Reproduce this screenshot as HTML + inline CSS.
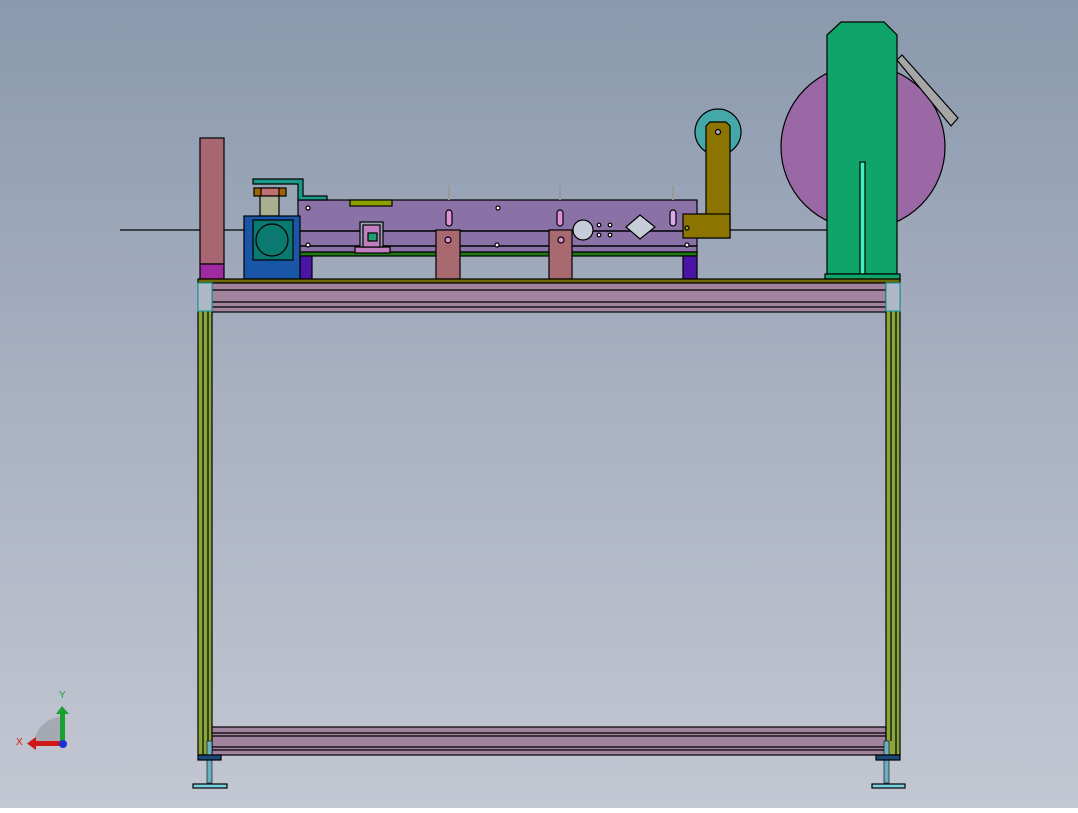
<!DOCTYPE html>
<html><head><style>html,body{margin:0;padding:0}body{width:1078px;height:808px;overflow:hidden}</style></head>
<body>
<svg width="1078" height="808" viewBox="0 0 1078 808" xmlns="http://www.w3.org/2000/svg" font-family="Liberation Sans, sans-serif">
<defs>
<linearGradient id="bg" x1="0" y1="0" x2="0" y2="1">
<stop offset="0" stop-color="#8a99ad"/><stop offset="0.5" stop-color="#a9b1c2"/><stop offset="1" stop-color="#c3c7d2"/>
</linearGradient>
</defs>
<rect width="1078" height="808" fill="url(#bg)"/>
<g stroke="#000" stroke-width="1.2">
<line x1="120" y1="230" x2="245" y2="230"/>
<line x1="730" y1="230" x2="827" y2="230"/>
<circle cx="863" cy="147" r="82" fill="#9a68a4"/>
<polygon points="897,60 902,55 958,118 951,126" fill="#a6a6a6"/>
<polygon points="827,35 841,22 884,22 897,35 897,274 827,274" fill="#0ea46a"/>
<rect x="860" y="162" width="5" height="112" fill="#40f0c0"/>
<rect x="825" y="274" width="75" height="5" fill="#0ea46a"/>
<circle cx="718" cy="132" r="23" fill="#45a8a8"/>
<polygon points="706,126 710,122 726,122 730,126 730,238 683,238 683,214 706,214" fill="#8c7400"/>
<circle cx="718" cy="132" r="2.5" fill="#b0b0c0"/>
<rect x="200" y="138" width="24" height="126" fill="#a86672"/>
<rect x="200" y="264" width="24" height="15" fill="#a02aa0"/>
<rect x="298" y="200" width="399" height="52" fill="#8a72a6"/>
<line x1="300" y1="231" x2="697" y2="231" stroke-width="1.5"/>
<line x1="300" y1="246" x2="697" y2="246" stroke-width="1.5"/>
<rect x="298" y="252" width="399" height="4" fill="#1f7a10"/>
<rect x="350" y="200" width="42" height="6" fill="#8ca000"/>
<rect x="683" y="214" width="47" height="24" fill="#8c7400"/>
<circle cx="583" cy="230" r="10" fill="#c6ccd8"/>
<path d="M626,227 L640,215 L655,227 L640,239 Z" fill="#c6ccd8"/>
<circle cx="599" cy="225" r="1.8" fill="#fff"/><circle cx="610" cy="225" r="1.8" fill="#fff"/>
<circle cx="599" cy="235" r="1.8" fill="#fff"/><circle cx="610" cy="235" r="1.8" fill="#fff"/>
<circle cx="308" cy="208" r="2" fill="#fff"/><circle cx="498" cy="208" r="2" fill="#fff"/>
<circle cx="308" cy="245" r="2" fill="#fff"/><circle cx="497" cy="245" r="2" fill="#fff"/>
<circle cx="687" cy="228" r="2" fill="#9ab000"/><circle cx="687" cy="245" r="2" fill="#fff"/>
<rect x="446" y="210" width="6" height="16" rx="3" fill="#e090d8"/>
<rect x="557" y="210" width="6" height="16" rx="3" fill="#e090d8"/>
<rect x="670" y="210" width="6" height="16" rx="3" fill="#d8a8e8"/>
<line x1="449" y1="186" x2="449" y2="200" stroke="#999" stroke-width="2"/>
<line x1="560" y1="186" x2="560" y2="200" stroke="#999" stroke-width="2"/>
<line x1="673" y1="186" x2="673" y2="200" stroke="#999" stroke-width="2"/>
<rect x="355" y="247" width="35" height="6" fill="#c080c0"/>
<rect x="360" y="222" width="23" height="25" fill="#9aa0b8"/>
<rect x="363" y="225" width="17" height="22" fill="#c080c0"/>
<rect x="368" y="233" width="9" height="8" fill="#20a070"/>
<rect x="300" y="256" width="12" height="23" fill="#4a14a4"/>
<rect x="683" y="256" width="14" height="23" fill="#4a14a4"/>
<rect x="436" y="230" width="24" height="49" fill="#a86a70"/>
<rect x="549" y="230" width="23" height="49" fill="#a86a70"/>
<circle cx="448" cy="240" r="3" fill="#d890d0"/><circle cx="561" cy="240" r="3" fill="#d890d0"/>
<polygon points="253,179 303,179 303,196 327,196 327,200 298,200 298,184 253,184" fill="#1a9a88"/>
<rect x="254" y="188" width="32" height="8" fill="#a06400"/>
<rect x="261" y="188" width="18" height="8" fill="#c07070"/>
<rect x="260" y="196" width="19" height="20" fill="#a8b090"/>
<rect x="244" y="216" width="56" height="63" fill="#1a56a8"/>
<rect x="253" y="220" width="40" height="40" fill="#0a7a70"/>
<circle cx="272" cy="240" r="16" fill="#0a7a70"/>
<rect x="198" y="279" width="702" height="4" fill="#6e6a00"/>
<rect x="210" y="283" width="676" height="29" fill="#a2839e"/>
<line x1="210" y1="290" x2="886" y2="290"/><line x1="210" y1="302" x2="886" y2="302"/><line x1="210" y1="307" x2="886" y2="307"/>
<rect x="210" y="727" width="676" height="28" fill="#a2839e"/>
<line x1="210" y1="733" x2="886" y2="733"/><line x1="210" y1="736" x2="886" y2="736"/><line x1="210" y1="747" x2="886" y2="747"/><line x1="210" y1="750" x2="886" y2="750"/>
<rect x="198" y="283" width="14" height="472" fill="#8aa63a"/>
<line x1="203" y1="311" x2="203" y2="755"/><line x1="208" y1="311" x2="208" y2="741"/>
<rect x="886" y="283" width="14" height="472" fill="#8aa63a"/>
<line x1="891" y1="311" x2="891" y2="741"/><line x1="896" y1="311" x2="896" y2="755"/>
<rect x="198" y="283" width="14" height="28" fill="#b0b8c8" stroke="#1aa0a0"/>
<rect x="886" y="283" width="14" height="28" fill="#b0b8c8" stroke="#1aa0a0"/>
<rect x="207" y="741" width="5" height="42" fill="#6ab0c0" stroke-width="0.6"/>
<rect x="884" y="741" width="5" height="42" fill="#6ab0c0" stroke-width="0.6"/>
<rect x="198" y="755" width="23" height="5" fill="#1a4a7a"/>
<rect x="876" y="755" width="24" height="5" fill="#1a4a7a"/>
<rect x="193" y="784" width="34" height="4" fill="#7ad0e0"/>
<rect x="872" y="784" width="33" height="4" fill="#7ad0e0"/>
</g>
<path d="M34,745 A28,28 0 0 1 62,717 L62,745 Z" fill="#9a9ea8" opacity="0.7"/>
<rect x="60" y="712" width="5" height="32" fill="#1aa030"/>
<polygon points="56,714 62,706 69,714" fill="#1aa030"/>
<rect x="34" y="741" width="28" height="5" fill="#d01818"/>
<polygon points="36,737 27,743.5 36,750" fill="#d01818"/>
<circle cx="63" cy="744" r="4" fill="#1a30d0"/>
<text x="59" y="698" font-size="10" fill="#1aa030">Y</text>
<text x="16" y="745" font-size="10" fill="#d01818">X</text>
</svg>
</body></html>
